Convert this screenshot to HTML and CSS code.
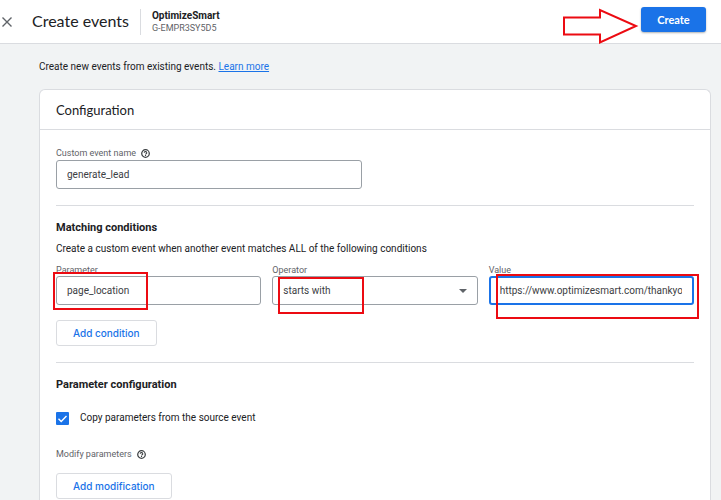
FILE: index.html
```html
<!DOCTYPE html>
<html lang="en">
<head>
    <meta charset="UTF-8">
    <meta name="viewport" content="width=device-width, initial-scale=1.0">
    <title>Create events</title>
    <link rel="stylesheet" href="styles.css">
</head>
<body>
    <header class="topbar">
        <button class="close-btn" type="button" aria-label="Close">
            <svg width="12" height="12" viewBox="0 0 12 12"><path d="M1.5 1.5l9 9M10.5 1.5l-9 9" fill="none" stroke="#5f6368" stroke-width="1.4"/></svg>
        </button>
        <h1>Create events</h1>
        <div class="property">
            <div class="property-name">OptimizeSmart</div>
            <div class="property-id">G-EMPR3SY5D5</div>
        </div>
        <div class="create-wrap">
            <button class="create-btn" type="button">Create</button>
            <svg class="arrow" width="78" height="38" viewBox="0 0 78 38"><path d="M3 10.500H39V3L75 19L39 35.500V27.500H3Z" fill="none" stroke="#ec0b12" stroke-width="2"/></svg>
        </div>
    </header>

    <main>
        <p class="intro">Create new events from existing events. <a href="#">Learn more</a></p>

        <form class="card">
            <h2>Configuration</h2>

            <section>
                <div class="label-row">
                    <label for="event-name">Custom event name</label>
                    <svg class="help" width="9" height="9" viewBox="0 0 10 10"><circle cx="5" cy="5" r="4.200" fill="none" stroke="#3c4043" stroke-width="1.400"/><path d="M3.600 4.200a1.400 1.300 0 1 1 2.100 1.100Q5 5.600 5 6.200M5 6.800v.9" fill="none" stroke="#3c4043" stroke-width="1.200"/></svg>
                </div>
                <input class="box event-name" type="text" id="event-name" value="generate_lead">
            </section>

            <section>
                <h3>Matching conditions</h3>
                <p class="desc">Create a custom event when another event matches ALL of the following conditions</p>
                <div class="conditions">
                    <div class="field">
                        <label for="parameter">Parameter</label>
                        <input class="box" type="text" id="parameter" value="page_location">
                        <span class="mark mark-parameter"></span>
                    </div>
                    <div class="field">
                        <label for="operator">Operator</label>
                        <select class="box" id="operator">
                            <option>starts with</option>
                        </select>
                        <svg class="caret" width="8" height="4" viewBox="0 0 8 4"><path d="M0 0h8L4 4z" fill="#5f6368"/></svg>
                        <span class="mark mark-operator"></span>
                    </div>
                    <div class="field">
                        <label for="value">Value</label>
                        <input class="box active" type="text" id="value" value="https://www.optimizesmart.com/thankyou">
                        <span class="mark mark-value"></span>
                    </div>
                </div>
                <button class="add-btn" type="button">Add condition</button>
            </section>

            <section>
                <h3>Parameter configuration</h3>
                <div class="check-row">
                    <input type="checkbox" id="copy" checked>
                    <svg class="tick" width="13" height="13" viewBox="0 0 13 13"><path d="M2.500 6.700l2.700 2.700L10.500 4" fill="none" stroke="#fff" stroke-width="1.400"/></svg>
                    <label for="copy">Copy parameters from the source event</label>
                </div>
                <div class="label-row">
                    <span>Modify parameters</span>
                    <svg class="help" width="9" height="9" viewBox="0 0 10 10"><circle cx="5" cy="5" r="4.200" fill="none" stroke="#3c4043" stroke-width="1.400"/><path d="M3.600 4.200a1.400 1.300 0 1 1 2.100 1.100Q5 5.600 5 6.200M5 6.800v.9" fill="none" stroke="#3c4043" stroke-width="1.200"/></svg>
                </div>
                <button class="add-btn modify" type="button">Add modification</button>
            </section>
        </form>
    </main>
</body>
</html>
```

FILE: styles.css
```css
* {
    box-sizing: border-box;
}
body {
    margin: 0;
    background: #f1f3f4;
    color: #202124;
    font-family: Roboto, sans-serif;
    font-size: 10px;
    line-height: 16px;
}
h1, h2, h3, p {
    margin: 0;
}
button {
    font-family: Lato, sans-serif;
    cursor: pointer;
}
.topbar {
    display: flex;
    align-items: center;
    height: 44px;
    padding-right: 15px;
    background: #fff;
    border-bottom: 1px solid #dadce0;
}
.close-btn {
    display: flex;
    width: 32px;
    padding: 0 0 0 1px;
    background: none;
    border: none;
}
.topbar h1 {
    padding-bottom: 2px;
    font-family: Lato, sans-serif;
    font-size: 16px;
    font-weight: 400;
}
.property {
    height: 26px;
    margin-left: 11px;
    padding: 1px 0 0 11px;
    border-left: 1px solid #dadce0;
    line-height: 12px;
}
.property-name {
    font-weight: 700;
}
.property-id {
    color: #5f6368;
    font-size: 9px;
}
.create-wrap {
    position: relative;
    margin-left: auto;
}
.create-btn {
    display: block;
    width: 65px;
    height: 25px;
    margin-bottom: 4px;
    padding: 0;
    background: #1a73e8;
    color: #fff;
    border: none;
    border-radius: 3px;
    box-shadow: 0 1px 2px rgba(60, 64, 67, 0.4);
    font-size: 11px;
    font-weight: 700;
}
.arrow {
    position: absolute;
    top: 0;
    right: 67px;
}
main {
    padding: 15px 10px 0 39px;
}
.intro {
    margin-bottom: 14px;
}
.intro a {
    color: #1a73e8;
}
.card {
    background: #fff;
    border: 1px solid #dadce0;
    border-bottom: none;
    border-radius: 6px 6px 0 0;
}
.card h2 {
    padding: 10px 16px 9px;
    border-bottom: 1px solid #dadce0;
    font-family: Lato, sans-serif;
    font-size: 13px;
    font-weight: 400;
    line-height: 20px;
}
section {
    margin: 0 16px;
    padding: 16px 0;
}
section + section {
    padding: 14px 0 16px;
    border-top: 1px solid #dadce0;
}
section + section:last-child {
    padding-bottom: 2px;
}
.card h3 {
    font-size: 11px;
    font-weight: 700;
}
.label-row {
    display: flex;
    align-items: center;
    gap: 5px;
    height: 14px;
    color: #5f6368;
    font-size: 9px;
}
.box {
    display: block;
    width: 100%;
    height: 29px;
    padding: 0 10px;
    background: #fff;
    color: #3c4043;
    border: 1px solid #9aa0a6;
    border-radius: 3px;
    font-family: Roboto, sans-serif;
    font-size: 10px;
    appearance: none;
}
.event-name {
    width: 48%;
}
.box.active {
    border: 2px solid #1a73e8;
    padding: 0 10px 0 9px;
}
.desc {
    margin: 5px 0 7px;
}
.conditions {
    display: grid;
    grid-template-columns: repeat(3, 1fr);
    gap: 11px;
}
.field {
    position: relative;
}
.field label {
    display: block;
    height: 12px;
    color: #5f6368;
    font-size: 9px;
    line-height: 13px;
}
.caret {
    position: absolute;
    right: 11px;
    bottom: 12px;
}
/* red highlight boxes over the filled in values */
.mark {
    position: absolute;
    border: 2px solid #ec0b12;
    pointer-events: none;
}
.mark-parameter {
    top: 8px;
    left: -3px;
    width: 95px;
    height: 38px;
}
.mark-operator {
    top: 13px;
    left: 6px;
    width: 86px;
    height: 37px;
}
.mark-value {
    top: 10px;
    left: 7px;
    right: -5px;
    height: 45px;
}
.add-btn {
    height: 26px;
    margin-top: 15px;
    padding: 0 16px;
    background: #fff;
    color: #1a73e8;
    border: 1px solid #dadce0;
    border-radius: 3px;
    font-family: Inter, sans-serif;
    font-size: 10px;
    font-weight: 500;
}
.add-btn.modify {
    margin-top: 12px;
}
.check-row {
    position: relative;
    display: flex;
    align-items: center;
    gap: 11px;
    margin: 17px 0 21px;
}
.check-row input {
    width: 13px;
    height: 13px;
    margin: 0;
    background: #1a73e8;
    border-radius: 1px;
    appearance: none;
}
.tick {
    position: absolute;
    left: 0;
    pointer-events: none;
}
```
